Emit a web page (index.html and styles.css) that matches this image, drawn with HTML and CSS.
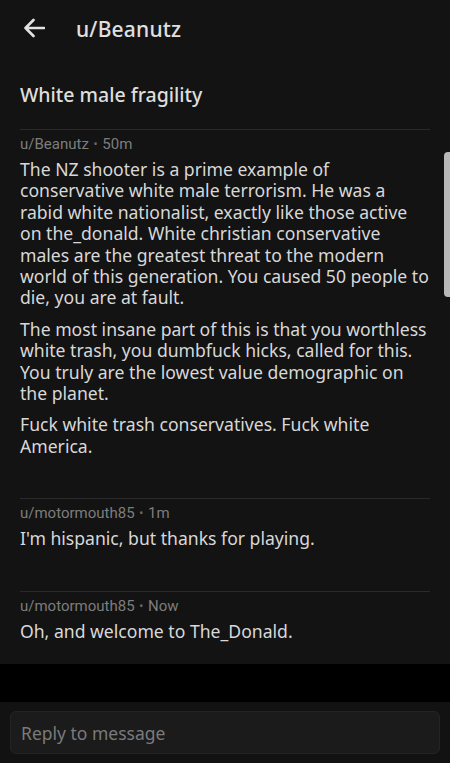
FILE: index.html
```html
<!DOCTYPE html>
<html lang="en">
<head>
    <meta charset="UTF-8">
    <meta name="viewport" content="width=device-width, initial-scale=1.0">
    <title>u/Beanutz</title>
    <link rel="stylesheet" href="styles.css">
</head>
<body>
    <div class="screen">
        <header class="topbar">
            <button class="back" aria-label="Back">
                <svg width="22" height="20" viewBox="0 0 22 20">
                    <path d="M21 10H2.5M10.5 2L2.5 10L10.5 18" fill="none" stroke="#e2e2e2" stroke-width="2.6" stroke-linecap="round" stroke-linejoin="round"/>
                </svg>
            </button>
            <span class="topbar-title">u/Beanutz</span>
        </header>

        <main class="thread">
            <h1 class="subject">White male fragility</h1>

            <div class="message">
                <div class="meta">u/Beanutz <span class="dot">•</span> 50m</div>
                <div class="body">
                    <p>The NZ shooter is a prime example of conservative white male terrorism. He was a rabid white nationalist, exactly like those active on the_donald. White christian conservative males are the greatest threat to the modern world of this generation. You caused 50 people to die, you are at fault.</p>
                    <p>The most insane part of this is that you worthless white trash, you dumbfuck hicks, called for this. You truly are the lowest value demographic on the planet.</p>
                    <p>Fuck white trash conservatives. Fuck white America.</p>
                </div>
            </div>

            <div class="message">
                <div class="meta">u/motormouth85 <span class="dot">•</span> 1m</div>
                <div class="body">
                    <p>I'm hispanic, but thanks for playing.</p>
                </div>
            </div>

            <div class="message">
                <div class="meta">u/motormouth85 <span class="dot">•</span> Now</div>
                <div class="body">
                    <p>Oh, and welcome to The_Donald.</p>
                </div>
            </div>
        </main>

        <div class="spacer"></div>

        <footer class="composer">
            <div class="reply-box">Reply to message</div>
        </footer>

        <div class="scrollbar"></div>
    </div>
</body>
</html>
```

FILE: styles.css
```css
* {
    box-sizing: border-box;
}
body {
    margin: 0;
    background: #000;
    font-family: "Noto Sans", "Open Sans", sans-serif;
    color: #d6d6d6;
}
.screen {
    position: relative;
    display: flex;
    flex-direction: column;
    height: 100vh;
    overflow: hidden;
}
.topbar {
    display: flex;
    align-items: center;
    height: 58px;
    padding: 0 0 0 23px;
    background: #131313;
}
.back {
    display: flex;
    padding: 0;
    margin: -2px 31px 0 0;
    background: none;
    border: none;
}
.topbar-title {
    font-size: 21px;
    font-weight: 500;
    color: #e0e0e0;
    letter-spacing: 0.2px;
}
.thread {
    background: #131313;
    padding: 24px 20px 0;
}
.subject {
    margin: 0 0 21px;
    font-size: 19.5px;
    line-height: 26px;
    font-weight: 500;
    color: #dedede;
}
.message {
    border-top: 1px solid #2a2a2a;
    padding: 5px 0 21px;
    margin-bottom: 20px;
}
.message:last-child {
    margin-bottom: 0;
    padding-bottom: 22px;
}
.meta {
    font-family: Roboto, "Noto Sans", sans-serif;
    font-size: 15px;
    line-height: 18px;
    color: #7d7d7d;
    margin-bottom: 6px;
}
.dot {
    font-size: 12px;
    vertical-align: 1px;
    margin: 0 1px;
    color: #6a6a6a;
}
.body p {
    margin: 0 0 10px;
    font-size: 17.6px;
    line-height: 21.4px;
    color: #d8d8d8;
}
.body p:last-child {
    margin-bottom: 0;
}
.spacer {
    flex: 1;
    background: #000;
}
.composer {
    background: #121212;
    padding: 9px 10px 9px;
}
.reply-box {
    height: 43px;
    padding: 0 10px;
    display: flex;
    align-items: center;
    background: #1b1b1b;
    border: 1px solid #242424;
    border-radius: 6px;
    font-size: 17.5px;
    color: #7a7a7a;
}
.scrollbar {
    position: absolute;
    top: 152px;
    right: 0;
    width: 6px;
    height: 145px;
    background: #b9b9b9;
    border-radius: 4px 0 0 4px;
}
```
